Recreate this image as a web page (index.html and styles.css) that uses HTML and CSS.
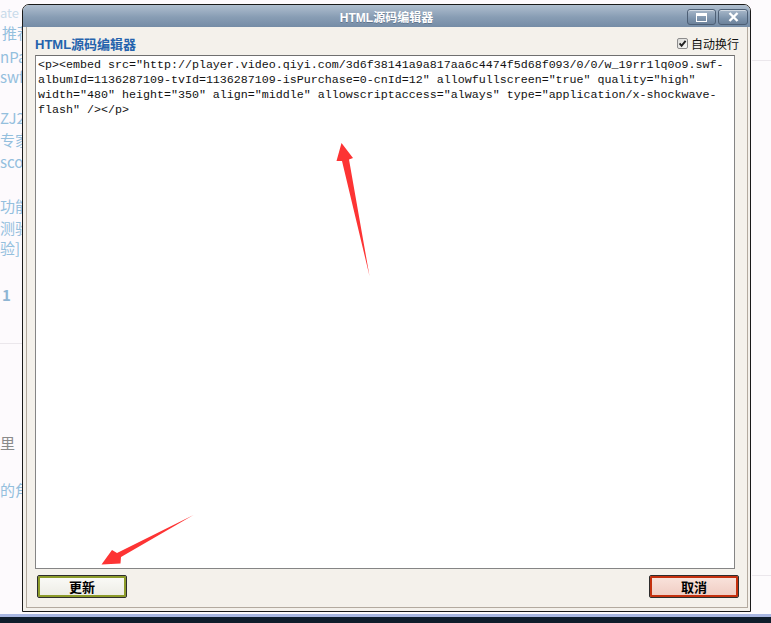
FILE: index.html
```html
<!DOCTYPE html>
<html lang="zh-CN">
  <head>
    <meta charset="UTF-8" />
    <meta name="viewport" content="width=device-width, initial-scale=1.0" />
    <title>HTML源码编辑器</title>
    <link rel="stylesheet" href="styles.css">
  </head>
  <body>
    <!-- Page behind the dialog (only the edges show) -->
    <div class="page">
      <div class="side side-left">
        <div class="frag frag-ate">ate</div>
        <div class="frag frag-in">推荐</div>
        <div class="frag frag-gap4">nPap</div>
        <div class="frag">swf/p</div>
        <div class="frag frag-gap21">ZJ2</div>
        <div class="frag frag-gap2">专家</div>
        <div class="frag frag-gap2">scon</div>
        <div class="frag frag-gap24">功能</div>
        <div class="frag frag-gap2">测验</div>
        <div class="frag">验]</div>
        <div class="frag frag-num">1</div>
        <div class="rule rule-left"></div>
        <div class="frag frag-dark">里</div>
        <div class="frag frag-gap27">的角</div>
      </div>
      <div class="page-main"></div>
      <div class="side side-right">
        <div class="rule rule-right-top"></div>
        <div class="rule rule-right-bottom"></div>
      </div>
    </div>
    <div class="taskbar"></div>

    <!-- Source editor dialog -->
    <div class="dialog">
      <div class="dialog-title">
        <span></span>
        <span class="title-text">HTML源码编辑器</span>
        <div class="title-btns">
          <span class="title-btn">
            <svg width="11" height="9" viewBox="0 0 11 9">
              <rect x="0.5" y="0.5" width="10" height="8" fill="none" stroke="#fff" />
              <rect x="0" y="0" width="11" height="3" fill="#fff" />
            </svg>
          </span>
          <span class="title-btn">
            <svg width="11" height="10" viewBox="0 0 11 10">
              <path d="M1.5 1 L9.5 9 M9.5 1 L1.5 9" stroke="#fff" stroke-width="2.4" />
            </svg>
          </span>
        </div>
      </div>

      <div class="dialog-body">
        <div class="frame">
          <div class="toolbar">
            <span class="label">HTML源码编辑器</span>
            <label class="wrap-opt">
              <svg class="check" width="11" height="11" viewBox="0 0 11 11">
                <defs>
                  <linearGradient id="boxfill" x1="0" y1="0" x2="1" y2="1">
                    <stop offset="0" stop-color="#d9d9d6" />
                    <stop offset="1" stop-color="#fbfbf9" />
                  </linearGradient>
                </defs>
                <rect x="0.5" y="0.5" width="10" height="10" rx="1.5" fill="url(#boxfill)" stroke="#8c8c8c" />
                <path d="M2.6 5.4 L4.6 7.8 L8.6 2.8" fill="none" stroke="#222" stroke-width="1.9" />
              </svg>
              自动换行
            </label>
          </div>

          <textarea class="source" spellcheck="false">&lt;p&gt;&lt;embed src="http://player.video.qiyi.com/3d6f38141a9a817aa6c4474f5d68f093/0/0/w_19rr1lq0o9.swf-albumId=1136287109-tvId=1136287109-isPurchase=0-cnId=12" allowfullscreen="true" quality="high" width="480" height="350" align="middle" allowscriptaccess="always" type="application/x-shockwave-flash" /&gt;&lt;/p&gt;</textarea>

          <div class="footer">
            <button class="btn btn-ok">更新</button>
            <button class="btn btn-cancel">取消</button>
          </div>
        </div>
      </div>
    </div>

    <!-- Red annotation arrows -->
    <svg class="arrows" width="771" height="623" viewBox="0 0 771 623">
      <polygon points="341.5,143 353,158 349,159.5 369.5,276 342,161 336.5,161" fill="#fd3434" />
      <polygon points="101.5,564.5 112,550 117,553 193.5,515 121,557 120.5,563.5" fill="#fd3434" />
    </svg>
  </body>
</html>
```

FILE: styles.css
```css
body {
  margin: 0;
  padding: 0;
  width: 771px;
  height: 623px;
  overflow: hidden;
  background-color: #fdfafd;
  font-family: "Liberation Sans", "Noto Sans CJK SC", sans-serif;
  position: relative;
}

/* Page behind the dialog */
.page {
  display: flex;
  height: 614px;
}

.side {
  overflow: hidden;
  white-space: nowrap;
}

.side-left {
  width: 22px;
}

.side-right {
  width: 19px;
  background-color: #fdfbfd;
}

.page-main {
  flex: 1;
}

.frag {
  height: 20px;
  line-height: 20px;
  font-size: 15px;
  color: #94bfdd;
  font-family: "Noto Sans CJK SC", sans-serif;
  overflow: hidden;
}

.frag-ate {
  margin-top: 3px;
  color: #c9dbea;
  font-size: 13px;
}

.frag-in { padding-left: 2px; }
.frag-gap2 { margin-top: 2px; }
.frag-gap4 { margin-top: 4px; }
.frag-gap21 { margin-top: 21px; }
.frag-gap24 { margin-top: 24px; }
.frag-gap27 { margin-top: 27px; }

.frag-num {
  margin-top: 27px;
  padding-left: 2px;
  font-weight: bold;
  color: #8fb5d3;
}

.frag-dark {
  margin-top: 89px;
  color: #8a8a8a;
}

.rule {
  height: 1px;
  background-color: #ebe7ec;
}

.rule-left {
  margin-top: 38px;
}

.rule-right-top {
  margin-top: 60px;
}

.rule-right-bottom {
  margin-top: 514px;
}

.taskbar {
  height: 6px;
  border-top: 3px solid #a9b7e2;
  background-color: #0f1d2b;
}

/* Dialog window */
.dialog {
  position: absolute;
  left: 22px;
  top: 4px;
  width: 729px;
  height: 608px;
  box-sizing: border-box;
  border: 1px solid #1a1a1a;
  border-radius: 7px 7px 0 0;
  background-color: #f4f1eb;
  display: flex;
  flex-direction: column;
  overflow: hidden;
}

.dialog-title {
  height: 22px;
  display: grid;
  grid-template-columns: 1fr auto 1fr;
  align-items: center;
  background: linear-gradient(#afbecf, #889db4 55%, #758ca6);
}

.title-text {
  color: #fff;
  font-size: 12px;
  font-weight: bold;
  text-shadow: 0 1px 0 rgba(40, 60, 80, 0.35);
}

.title-btns {
  justify-self: end;
  display: flex;
  gap: 2px;
  margin-right: 2px;
  margin-top: 2px;
}

.title-btn {
  width: 27px;
  height: 14px;
  border: 1px solid #4d5f75;
  border-radius: 3px;
  background: linear-gradient(#a7b7c9, #7f95ad 60%, #6c829b);
  box-shadow: inset 0 1px 0 rgba(255, 255, 255, 0.5);
  display: flex;
  align-items: center;
  justify-content: center;
}

.title-btn:last-child {
  width: 28px;
}

.dialog-body {
  flex: 1;
  display: flex;
  padding: 0 2px 3px 3px;
}

.frame {
  flex: 1;
  display: flex;
  flex-direction: column;
  border: 1px solid #b3aa9f;
  border-top: none;
  padding: 0 10px 9px 8px;
}

.toolbar {
  height: 24px;
  padding-top: 4px;
  display: flex;
  align-items: center;
  justify-content: space-between;
}

.label {
  font-size: 13px;
  font-weight: bold;
  color: #2563ad;
}

.wrap-opt {
  display: flex;
  align-items: center;
  gap: 3px;
  font-size: 12px;
  color: #111;
  font-family: "Noto Sans CJK SC", sans-serif;
  margin-right: -2px;
}

.source {
  width: 700px;
  height: 514px;
  box-sizing: border-box;
  margin: 0;
  padding: 2px;
  border: 1px solid #858585;
  border-top-color: #6f6f6f;
  background-color: #fff;
  font-family: "Liberation Mono", monospace;
  font-size: 11.67px;
  line-height: 15px;
  color: #111;
  resize: none;
  overflow: hidden;
  outline: none;
}

.footer {
  margin-top: 6px;
  display: flex;
  justify-content: space-between;
  padding-left: 2px;
  margin-right: -2px;
}

.btn {
  width: 90px;
  height: 23px;
  box-sizing: border-box;
  border: 1px solid #2d2d2d;
  border-radius: 2px;
  font-family: "Liberation Sans", "Noto Sans CJK SC", sans-serif;
  font-size: 13px;
  font-weight: bold;
  color: #000;
  padding: 0;
  cursor: pointer;
}

.btn-ok {
  background: linear-gradient(#fbfbf8, #ecebe4);
  box-shadow: inset 0 0 0 2px #8c9b2a;
}

.btn-cancel {
  background: linear-gradient(#f9e4dd, #f0cbc1);
  box-shadow: inset 0 0 0 2px #c4300e;
}

/* Annotation arrows over everything */
.arrows {
  position: absolute;
  left: 0;
  top: 0;
  pointer-events: none;
}
```
